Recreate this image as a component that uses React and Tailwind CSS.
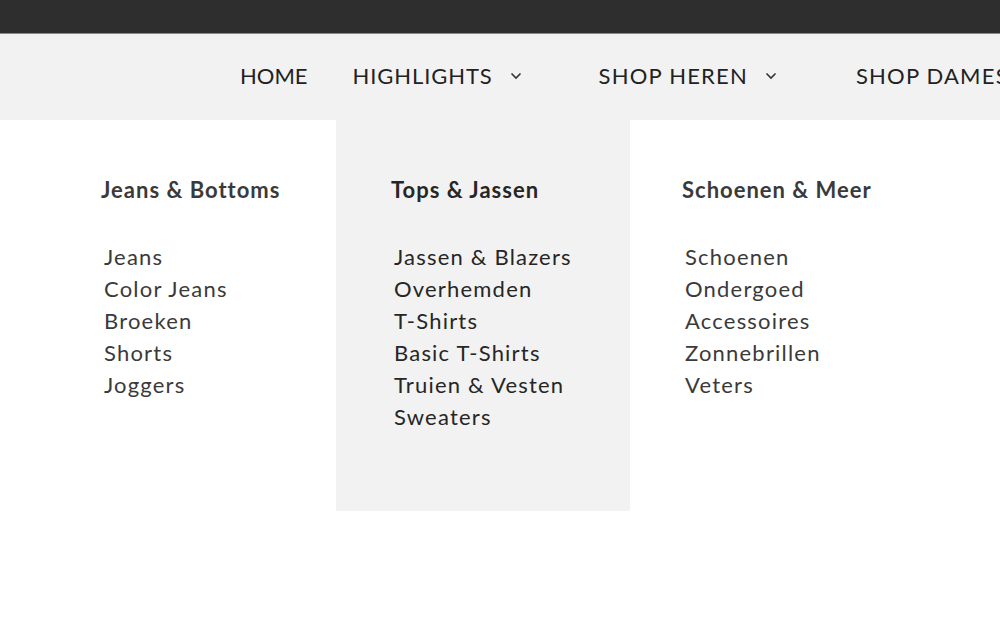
import React from "react";

const font = { fontFamily: "Lato, 'Noto Sans', sans-serif" };

function Chevron() {
  return (
    <svg width="12" height="8" viewBox="0 0 12 8" className="ml-[17px] mt-[1px]">
      <path d="M1.5 1.5 L6 6 L10.5 1.5" fill="none" stroke="#333" strokeWidth="1.6" />
    </svg>
  );
}

const cols = [
  { title: "Jeans & Bottoms", items: ["Jeans", "Color Jeans", "Broeken", "Shorts", "Joggers"], cls: "w-[290px] pl-[55px] text-[#3a3a3a]" },
  { title: "Tops & Jassen", items: ["Jassen & Blazers", "Overhemden", "T-Shirts", "Basic T-Shirts", "Truien & Vesten", "Sweaters"], cls: "w-[294px] pl-[55px] bg-[#f2f2f2] text-[#262626]" },
  { title: "Schoenen & Meer", items: ["Schoenen", "Ondergoed", "Accessoires", "Zonnebrillen", "Veters"], cls: "w-[294px] pl-[52px] text-[#3a3a3a]" },
];

export default function App() {
  return (
    <div className="w-[1000px] h-[644px] overflow-hidden bg-white text-[#333]" style={font}>
      <div className="h-[33px] bg-[#2e2e2e]" />
      <div className="h-px bg-[#8a8a8a]" />
      <nav className="h-[86px] bg-[#f2f2f2] flex items-center pl-[240px] pb-[3px] whitespace-nowrap text-[22px] tracking-[0.9px] text-[#222]">
        <span className="tracking-[0px]">HOME</span>
        <span className="ml-[45px] flex items-center">HIGHLIGHTS<Chevron /></span>
        <span className="ml-[77px] flex items-center tracking-[1.2px]">SHOP HEREN<Chevron /></span>
        <span className="ml-[79px] tracking-[1.2px]">SHOP DAMES</span>
      </nav>
      <div className="flex pl-[46px]">
        {cols.map((c) => (
          <div key={c.title} className={`${c.cls} h-[391px] pt-[57px]`}>
            <div className="text-[22px] font-bold leading-[26px] tracking-[1px]">{c.title}</div>
            <ul className="mt-[38px] pl-[3px] text-[22px] leading-[32px] tracking-[1.2px]">
              {c.items.map((i) => (
                <li key={i}>{i}</li>
              ))}
            </ul>
          </div>
        ))}
      </div>
    </div>
  );
}
